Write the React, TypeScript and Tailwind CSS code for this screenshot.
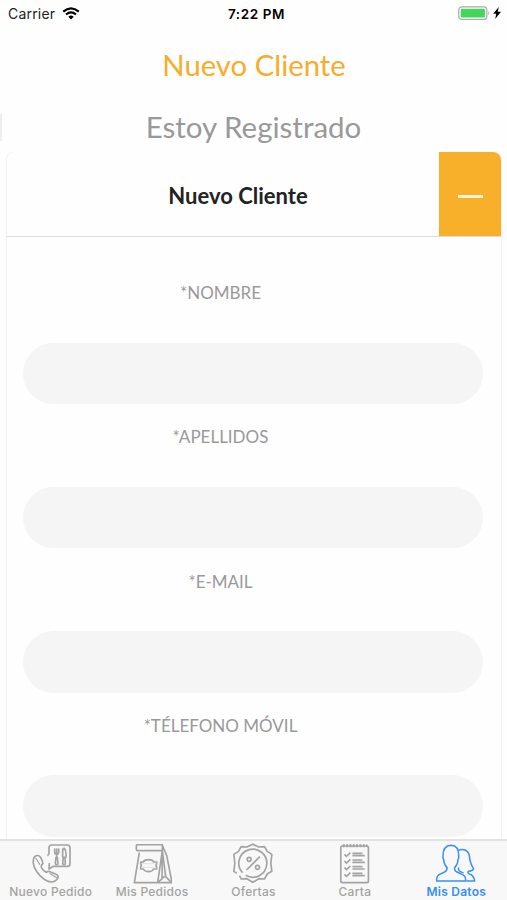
import React, { useState } from "react";

interface Field {
  name: string;
  label: string;
  type: string;
}

interface Tab {
  label: string;
  icon: React.ReactNode;
}

const fields: Field[] = [
  { name: "nombre", label: "*NOMBRE", type: "text" },
  { name: "apellidos", label: "*APELLIDOS", type: "text" },
  { name: "email", label: "*E-MAIL", type: "email" },
  { name: "telefono", label: "*TÉLEFONO MÓVIL", type: "tel" },
];

const PhoneIcon = () => (
  <svg viewBox="92 42 120 120" className="h-10 w-10 shrink-0" fill="none" stroke="currentColor" strokeWidth="5" strokeLinejoin="round" strokeLinecap="round">
    <path d="M143 75l3-4V53q0-8 8-8h47q8 0 8 8v48q0 8-8 8h-42l-13 8 1-16" />
    <path d="M103 80q6-5 12-3 5 2 8 9l4 11q2 6-4 9-2 4 3 11 6 8 13 10 4-5 10-2l18 8q8 4 6 10-5 11-18 13-18 0-36-19-24-26-20-48 1-6 4-9z" />
    <path d="M106 84l12 19M149 131l20 12" strokeWidth="3.5" />
    <path d="M163 57v10q0 6 6 6t6-6V57M169 57v24M167 82l-2 18q0 4 4 4t4-4l-2-18M187 80V62q0-7 5-7 5 5 5 17v10h-8l-2 18q0 4 4 4t4-4l-1-17" />
  </svg>
);

const BagIcon = () => (
  <svg viewBox="96 42 120 120" className="h-10 w-10 shrink-0" fill="none" stroke="currentColor" strokeWidth="5" strokeLinejoin="round">
    <path d="M187 44h-74q-4 0-4 4v10q0 4 4 4h74zM118 68l-15 90h113l-16-82-13-30" />
    <path d="M187 62l-14 96M187 62l10 78 18 18M194 139l-21 19M187 62l-1 84" />
    <path d="M130 96q3-7 15-7 13 0 16 7h9v5l-2 5 2 5v6h-9q-4 8-16 8-11 0-15-8h-8v-6l2-5-2-5v-5z" />
    <path d="M128 101h34M128 112h34" strokeWidth="2" opacity=".4" />
  </svg>
);

const OfferIcon = () => (
  <svg viewBox="100.5 42 120 120" className="h-10 w-10 shrink-0 overflow-visible" fill="none" stroke="currentColor" strokeWidth="5" strokeLinejoin="round">
    <path d="M120 137l5 10 17-1 18 11 18-11 17 1 8-15 14-8-3-24 3-27-14-9-8-14-17 1-18-8-18 8-17-1-8 14-14 9 3 27-3 24 9 6" />
    <path d="M129 128a42 42 0 1 1 10 8" />
    <path d="M141 120l40-40" />
    <circle cx="149" cy="88" r="6" />
    <circle cx="174" cy="112" r="6" />
  </svg>
);

const MenuIcon = () => (
  <svg viewBox="104.7 42 120 120" className="h-10 w-10 shrink-0" fill="none" stroke="currentColor" strokeWidth="5">
    <rect x="122" y="48" width="83" height="110" rx="5" />
    <path d="M128 47h74" strokeWidth="9" strokeDasharray="6 4" />
    {[73, 93, 113, 133].map((y) => (
      <g key={y}>
        <path d={`M133 ${y}l6 6 12-11`} strokeWidth="5" />
        <path d={`M157 ${y - 3}h30M157 ${y + 4}h37`} strokeWidth="5" />
      </g>
    ))}
  </svg>
);

const PeopleIcon = () => (
  <svg viewBox="103 42 120 120" className="h-10 w-10 shrink-0 overflow-visible" fill="none" stroke="currentColor" strokeWidth="4.5" strokeLinejoin="round">
    <path d="M105 153q-1-14 7-19l17-8q8-4 7-14-9-8-10-24-4-3-2-10 0-31 24-32 24 1 23 32 2 7-2 10-1 16-10 24-2 10 7 14l17 8q10 5 9 19z" />
    <path d="M171 61q8-4 16-2 13 3 16 18 2 24 13 39-3 7-16 8-3 5 3 8 14 4 16 21h-25" />
    <path d="M171 112q-3 10 8 14l7 3" strokeWidth="4" />
  </svg>
);

const tabs: Tab[] = [
  { label: "Nuevo Pedido", icon: <PhoneIcon /> },
  { label: "Mis Pedidos", icon: <BagIcon /> },
  { label: "Ofertas", icon: <OfferIcon /> },
  { label: "Carta", icon: <MenuIcon /> },
  { label: "Mis Datos", icon: <PeopleIcon /> },
];

const StatusBar = () => (
  <div className="grid h-7 shrink-0 grid-cols-3 items-center pl-2 pr-1.5 font-['Inter',sans-serif] text-black">
    <div className="flex items-center gap-[7px]">
      <span className="-mt-0.5 text-[14px] tracking-[0.2px] text-[#222]">Carrier</span>
      <svg viewBox="0 0 18 13" className="-mt-0.5 h-[13px] w-[18px]" fill="none" stroke="currentColor" strokeWidth="2.2">
        <path d="M1.2 4.6Q9-2 16.8 4.6M4 7.5q5-4.2 10 0" />
        <path d="M6.3 9.7q2.7-2.2 5.4 0L9 12.4z" fill="currentColor" stroke="none" />
      </svg>
    </div>
    <span className="pl-1 text-center text-[13.5px] font-semibold tracking-[0.6px]">7:22 PM</span>
    <div className="flex items-center justify-end gap-[3px]">
      <svg viewBox="0 0 32 14" className="-mt-0.5 h-3.5 w-8">
        <rect x=".8" y=".8" width="28" height="12.6" rx="3" fill="#fff" stroke="#aaa" strokeWidth="1.2" />
        <rect x="2.7" y="2.7" width="24.2" height="8.8" rx="1" fill="#43d65b" />
        <path d="M30.3 5q1.7 2 0 4z" fill="#999" />
      </svg>
      <svg viewBox="0 0 8 12" className="-mt-0.5 h-3 w-2" fill="currentColor">
        <path d="M5.7 0L.2 6.8h3L2.2 12 8 4.8H4.8z" />
      </svg>
    </div>
  </div>
);

const App: React.FC = () => {
  const [open, setOpen] = useState(true);
  const [activeTab, setActiveTab] = useState("Mis Datos");

  return (
    <div className="flex h-[900px] w-[507px] flex-col overflow-hidden bg-[#fefefe] font-['Lato',sans-serif]">
      <StatusBar />

      <div className="flex h-[124px] shrink-0 flex-col items-center leading-[62px]">
        <h1 className="mt-1.5 h-[62px] pl-px text-[29.3px] text-[#f6ad2b]">Nuevo Cliente</h1>
        <div className="flex w-full items-center">
          <span className="h-[27px] w-0.5 bg-[#eee]" />
          <h2 className="h-[62px] flex-1 pr-0.5 text-center text-[29.5px] text-[#999]">Estoy Registrado</h2>
        </div>
      </div>

      <main className="min-h-0 flex-1 overflow-hidden pl-1.5 pr-[5px]">
        <div className="flex h-full flex-col rounded-t-lg border-x border-[#f1f1f1] bg-[#fefefe] shadow-[0_0_2px_#f4f4f4]">
          <div className="flex h-[85px] shrink-0 border-b border-[#dcdcdc]">
            <h3 className="flex flex-1 items-center justify-center pt-0.5 pr-0.5 pl-8 text-[22px] font-bold text-[#222]">Nuevo Cliente</h3>
            <button type="button" aria-label="Nuevo Cliente" onClick={() => setOpen(!open)} className="flex w-[62px] items-center justify-center rounded-tr-lg bg-[#f8b02b]">
              <span className="mt-1 h-[3px] w-[25px] bg-[#fff6d8]" />
            </button>
          </div>

          {open && (
            <form className="pl-4 pr-[18px] pt-[38px]">
              {fields.map((field) => (
                <div key={field.name} className="mb-[15.3px] h-[129px]">
                  <label htmlFor={field.name} className="block h-[67.6px] pr-[65px] text-center text-[17px] leading-9 text-[#999]">
                    {field.label}
                  </label>
                  <input id={field.name} name={field.name} type={field.type} className="block h-[61.4px] w-full rounded-full bg-[#f5f5f5] px-6 outline-none" />
                </div>
              ))}
            </form>
          )}
        </div>
      </main>

      <nav className="grid h-[61px] shrink-0 grid-cols-5 border-t-2 border-[#e2e2e2] bg-[#f8f8f8] pt-[3px] font-['Inter',sans-serif]">
        {tabs.map((tab) => (
          <button
            key={tab.label}
            type="button"
            onClick={() => setActiveTab(tab.label)}
            className={`flex min-w-0 flex-col items-center ${activeTab === tab.label ? "text-[#3490f2]" : "text-[#a3a3a3]"}`}
          >
            {tab.icon}
            <span className={`whitespace-nowrap text-[12px] leading-4 tracking-[0.25px] ${activeTab === tab.label ? "font-semibold" : "font-medium"}`}>{tab.label}</span>
          </button>
        ))}
      </nav>
    </div>
  );
};

export default App;
